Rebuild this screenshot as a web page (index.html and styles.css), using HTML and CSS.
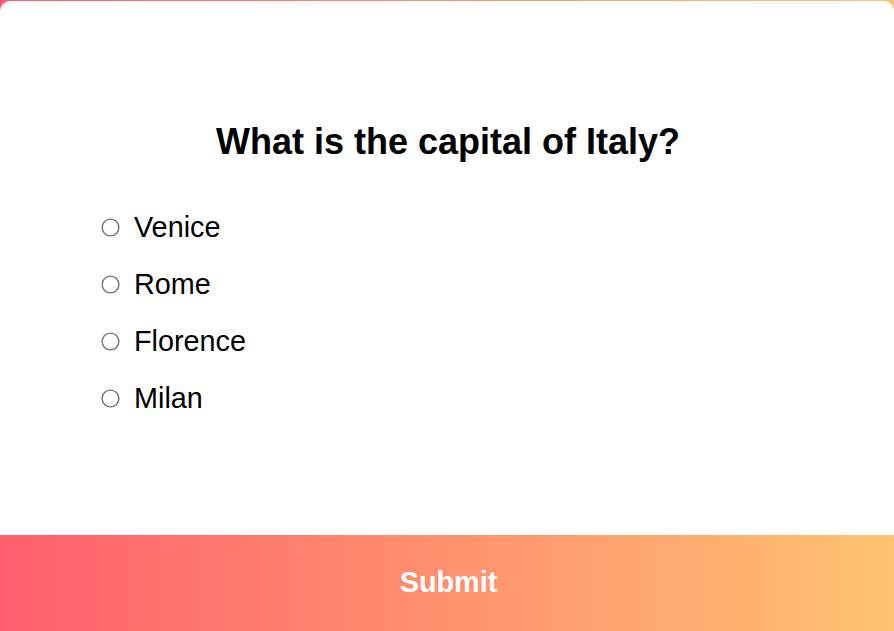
FILE: index.html
```html
<!DOCTYPE html>
<html>
<head>
<meta charset="utf-8">
<link rel="stylesheet" href="styles.css">
</head>
<body>
<div class="card">
  <div class="content">
    <h2 class="question">What is the capital of Italy?</h2>
    <ul class="options">
      <li class="option"><label><input type="radio" name="answer"> <span>Venice</span></label></li>
      <li class="option"><label><input type="radio" name="answer"> <span>Rome</span></label></li>
      <li class="option"><label><input type="radio" name="answer"> <span>Florence</span></label></li>
      <li class="option"><label><input type="radio" name="answer"> <span>Milan</span></label></li>
    </ul>
  </div>
  <button class="submit">Submit</button>
</div>
</body>
</html>
```
FILE: styles.css
```css
* { box-sizing: border-box; }
html, body { margin: 0; height: 100%; }
body {
  background: linear-gradient(to right, #ff5f6d, #ffc371);
  font-family: "Liberation Sans", Arial, sans-serif;
  overflow: hidden;
}
.card {
  margin-top: 1px;
  background: #fff;
  border-radius: 10px;
  overflow: hidden;
  height: 640px;
  display: flex;
  flex-direction: column;
}
.content {
  padding: 121px 104px 0;
  height: 534px;
}
.question {
  margin: 0 0 50px 2px;
  text-align: center;
  font-size: 36px;
  font-weight: bold;
  color: #000;
  line-height: 40px;
}
.options {
  list-style: none;
  margin: 0;
  padding: 0;
  display: flex;
  flex-direction: column;
  gap: 27px;
}
.option label {
  display: flex;
  align-items: center;
  font-size: 28.8px;
  line-height: 30px;
  color: #000;
}
.option input {
  margin: 0 17px 0 0;
  width: 13px;
  height: 13px;
  transform: scale(1.4);
}
.submit {
  border: 0;
  width: 100%;
  height: 96px;
  background: linear-gradient(to right, #ff5f6d, #ffc371);
  color: #fff;
  font-family: "Liberation Sans", Arial, sans-serif;
  font-size: 28.8px;
  font-weight: bold;
  padding: 0 0 2px 3px;
}
```
